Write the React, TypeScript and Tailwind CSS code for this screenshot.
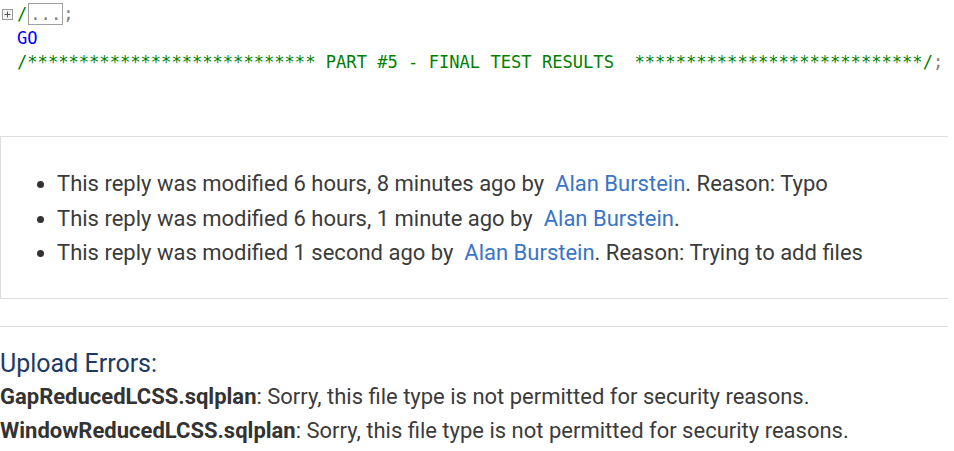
import React from "react";

const mono = { fontFamily: '"DejaVu Sans Mono", "Liberation Mono", monospace' };

function CodeBlock() {
  const stars = "*".repeat(28);
  return (
    <div className="pt-[2px] text-[17.1px] leading-[24px] whitespace-pre" style={mono}>
      {/* collapsed region */}
      <div className="flex items-center h-[24px]">
        <span className="w-[17px] flex items-center">
          <span className="ml-[2px] w-[11px] h-[11px] border border-[#999] bg-[#f4f4f4] flex items-center justify-center">
            <svg width="9" height="9" viewBox="0 0 9 9">
              <path d="M1.5 4.5h6M4.5 1.5v6" stroke="#555" strokeWidth="1" />
            </svg>
          </span>
        </span>
        <span className="text-[#008000]">/</span>
        <span className="ml-[1px] h-[22px] px-[1px] border border-[#a0a0a0] text-[#808080] leading-[20px]">...</span>
        <span className="text-[#808080]">;</span>
      </div>
      <div className="pl-[17px] text-[#0000ff]">GO</div>
      <div className="pl-[17px]">
        <span className="text-[#008000]">
          /{stars} PART #5 - FINAL TEST RESULTS  {stars}/
        </span>
        <span className="text-[#808080]">;</span>
      </div>
    </div>
  );
}

function Author() {
  return <a className="text-[#3a74c6]">Alan Burstein</a>;
}

export default function App() {
  return (
    <div
      className="w-[954px] h-[451px] overflow-hidden bg-white text-[#3b3b3b]"
      style={{ fontFamily: 'Roboto, "Noto Sans", sans-serif' }}
    >
      <CodeBlock />

      <div className="w-[948px] overflow-hidden mt-[62px]">
        {/* modification notes */}
        <div className="w-[980px] h-[163px] border border-[#dddddd] pt-[30px]">
          <ul className="list-disc pl-[56px] text-[22px] leading-[34.5px] marker:text-[#333]">
            <li>
              This reply was modified 6 hours, 8 minutes ago by&nbsp; <Author />. Reason: Typo
            </li>
            <li>
              This reply was modified 6 hours, 1 minute ago by&nbsp; <Author />.
            </li>
            <li>
              This reply was modified 1 second ago by&nbsp; <Author />. Reason: Trying to add files
            </li>
          </ul>
        </div>

        <div className="mt-[27px] border-t border-[#dddddd]" />
      </div>

      {/* upload errors */}
      <div className="pt-[21px]">
        <div className="text-[25px] leading-[32px] text-[#1d3a63]">Upload Errors:</div>
        <div className="text-[22px] leading-[34px]">
          <div>
            <b className="font-bold text-[#333]">GapReducedLCSS.sqlplan</b>: Sorry, this file type is not permitted for security reasons.
          </div>
          <div>
            <b className="font-bold text-[#333]">WindowReducedLCSS.sqlplan</b>: Sorry, this file type is not permitted for security reasons.
          </div>
        </div>
      </div>
    </div>
  );
}
